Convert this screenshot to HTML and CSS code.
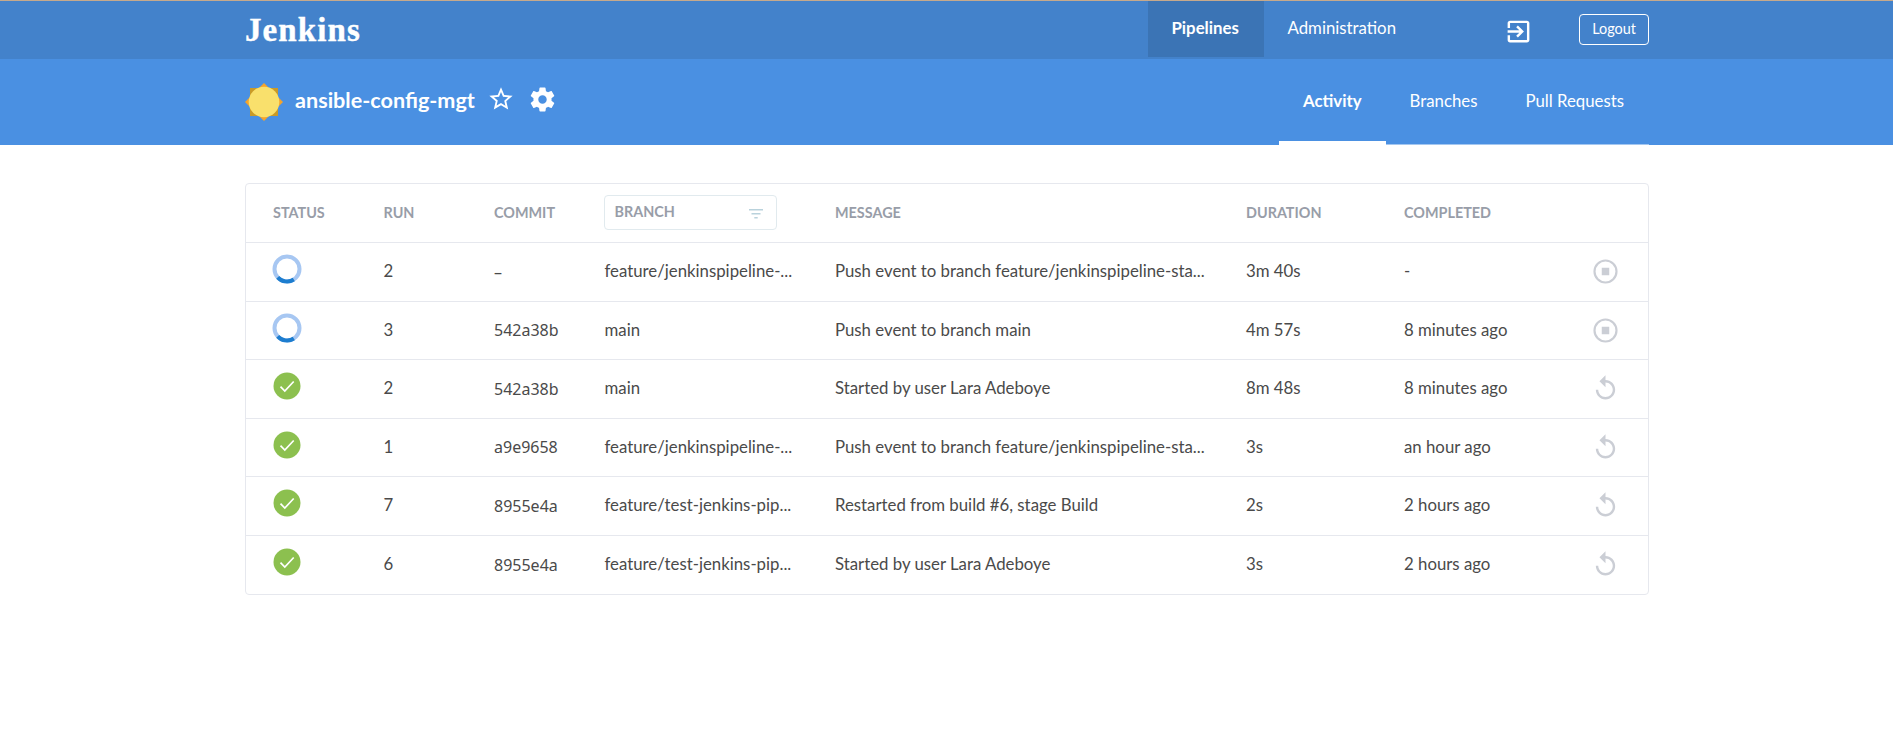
FILE: index.html
```
<!DOCTYPE html>
<html lang="en">
<head>
<meta charset="utf-8">
<title>Jenkins Blue Ocean</title>
<link rel="stylesheet" href="styles.css">
</head>
<body>
<svg class="defs" aria-hidden="true">
  <symbol id="running" viewBox="0 0 30 30"><circle cx="15" cy="15" r="12.5" fill="none" stroke="#a7c7f2" stroke-width="4"/><path d="M5.7 23.3A12.5 12.5 0 0 0 21.8 25.5" fill="none" stroke="#1d7dcf" stroke-width="4"/></symbol>
  <symbol id="success" viewBox="0 0 30 30"><circle cx="15" cy="15" r="13.5" fill="#8cc04f"/><path d="M8.5 15.6l4.3 4.5 8.9-9.6" fill="none" stroke="#fff" stroke-width="1.7"/></symbol>
  <symbol id="stop" viewBox="0 0 24 24"><path d="M12 2a10 10 0 1 0 0 20 10 10 0 0 0 0-20zm0 18.2a8.2 8.2 0 1 1 0-16.4 8.2 8.2 0 0 1 0 16.4zM8.9 8.9h6.2v6.2H8.9z"/></symbol>
  <symbol id="replay" viewBox="0 0 24 24"><path d="M12 5V1L7 6l5 5V7c3.31 0 6 2.69 6 6s-2.69 6-6 6-6-2.69-6-6H4c0 4.42 3.58 8 8 8s8-3.58 8-8-3.58-8-8-8z"/></symbol>
</svg>
<header class="topbar">
  <div class="container topbar-inner">
    <div class="logo">Jenkins</div>
    <nav class="topnav">
      <a class="toplink active">Pipelines</a>
      <a class="toplink">Administration</a>
      <svg class="exit" viewBox="0 0 24 24"><path d="M10.09 15.59L11.5 17l5-5-5-5-1.41 1.41L12.67 11H3v2h9.67l-2.58 2.59zM19 3H5c-1.11 0-2 .9-2 2v4h2V5h14v14H5v-4H3v4c0 1.1.89 2 2 2h14c1.1 0 2-.9 2-2V5c0-1.1-.9-2-2-2z"/></svg>
      <a class="logout">Logout</a>
    </nav>
  </div>
</header>
<section class="subbar">
  <div class="container subbar-inner">
    <svg class="weather" viewBox="0 0 38 38"><path fill="#c99a27" d="M5 5h28v28H5z"/><path fill="#f5a42a" d="M19 0l19 19-19 19L0 19z"/><circle cx="19" cy="19" r="15.3" fill="#f9e06c"/></svg>
    <h1 class="title">ansible-config-mgt</h1>
    <svg class="star" viewBox="0 0 24 24"><path d="M22 9.24l-7.19-.62L12 2 9.19 8.63 2 9.24l5.46 4.73L5.82 21 12 17.27 18.18 21l-1.63-7.03L22 9.24zM12 15.4l-3.76 2.27 1-4.28-3.32-2.88 4.38-.38L12 6.1l1.71 4.04 4.38.38-3.32 2.88 1 4.28L12 15.4z"/></svg>
    <svg class="gear" viewBox="0 0 24 24"><path d="M19.43 12.98c.04-.32.07-.64.07-.98s-.03-.66-.07-.98l2.11-1.65c.19-.15.24-.42.12-.64l-2-3.46c-.12-.22-.39-.3-.61-.22l-2.49 1c-.52-.4-1.08-.73-1.69-.98l-.38-2.65C14.46 2.18 14.25 2 14 2h-4c-.25 0-.46.18-.49.42l-.38 2.65c-.61.25-1.17.59-1.69.98l-2.49-1c-.23-.09-.49 0-.61.22l-2 3.46c-.13.22-.07.49.12.64l2.11 1.65c-.04.32-.07.65-.07.98s.03.66.07.98l-2.11 1.65c-.19.15-.24.42-.12.64l2 3.46c.12.22.39.3.61.22l2.49-1c.52.4 1.08.73 1.69.98l.38 2.65c.03.24.24.42.49.42h4c.25 0 .46-.18.49-.42l.38-2.65c.61-.25 1.17-.59 1.69-.98l2.49 1c.23.09.49 0 .61-.22l2-3.46c.12-.22.07-.49-.12-.64l-2.11-1.65zM12 15.5c-1.93 0-3.5-1.57-3.5-3.5s1.57-3.5 3.5-3.5 3.5 1.57 3.5 3.5-1.57 3.5-3.5 3.5z"/></svg>
    <nav class="tabs">
      <a class="tab active">Activity</a>
      <a class="tab">Branches</a>
      <a class="tab">Pull Requests</a>
    </nav>
  </div>
</section>
<main class="container">
  <div class="table">
    <div class="row head">
      <span>STATUS</span><span>RUN</span><span>COMMIT</span>
      <div class="filter"><span>BRANCH</span><svg class="filter-icon" viewBox="0 0 14 10"><path d="M0 0h14v1.6H0zM2.5 4h9v1.6h-9zM5.3 8h3.4v1.5H5.3z"/></svg></div>
      <span>MESSAGE</span><span>DURATION</span><span>COMPLETED</span><span></span>
    </div>
    <div class="row">
      <svg class="status"><use href="#running"/></svg><span>2</span><span class="hash">–</span><span>feature/jenkinspipeline-...</span><span>Push event to branch feature/jenkinspipeline-sta...</span><span>3m 40s</span><span>-</span><svg class="action"><use href="#stop"/></svg>
    </div>
    <div class="row">
      <svg class="status"><use href="#running"/></svg><span>3</span><span class="hash">542a38b</span><span>main</span><span>Push event to branch main</span><span>4m 57s</span><span>8 minutes ago</span><svg class="action"><use href="#stop"/></svg>
    </div>
    <div class="row">
      <svg class="status"><use href="#success"/></svg><span>2</span><span class="hash">542a38b</span><span>main</span><span>Started by user Lara Adeboye</span><span>8m 48s</span><span>8 minutes ago</span><svg class="action"><use href="#replay"/></svg>
    </div>
    <div class="row">
      <svg class="status"><use href="#success"/></svg><span>1</span><span class="hash">a9e9658</span><span>feature/jenkinspipeline-...</span><span>Push event to branch feature/jenkinspipeline-sta...</span><span>3s</span><span>an hour ago</span><svg class="action"><use href="#replay"/></svg>
    </div>
    <div class="row">
      <svg class="status"><use href="#success"/></svg><span>7</span><span class="hash">8955e4a</span><span>feature/test-jenkins-pip...</span><span>Restarted from build #6, stage Build</span><span>2s</span><span>2 hours ago</span><svg class="action"><use href="#replay"/></svg>
    </div>
    <div class="row">
      <svg class="status"><use href="#success"/></svg><span>6</span><span class="hash">8955e4a</span><span>feature/test-jenkins-pip...</span><span>Started by user Lara Adeboye</span><span>3s</span><span>2 hours ago</span><svg class="action"><use href="#replay"/></svg>
    </div>
  </div>
</main>
</body>
</html>
```
FILE: styles.css
```
* { box-sizing: border-box; }
body { margin: 0; background: #fff; color: #4a4a4a; font: 16.8px/24px Lato, sans-serif; }
.defs { display: none; }
.container { width: 1404px; margin-left: 245px; }
.topbar { height: 59px; background: #4382cb; border-top: 1px solid #c6a98c; }
.topbar-inner { display: flex; justify-content: space-between; }
.logo { color: #fff; font: bold 33px/38px "Liberation Serif", serif; letter-spacing: 1.1px; padding-top: 10px; -webkit-text-stroke: .4px #fff; }
.topnav { display: flex; align-items: flex-start; color: #fff; }
.toplink { height: 56px; padding: 15px 24px 0; }
.topnav .active { width: 116px; background: #3b74b5; font-weight: bold; }
.exit { width: 29px; height: 29px; fill: #fff; margin: 16px 46px 0 84px; }
.logout { width: 70px; height: 31px; margin-top: 13px; border: 1px solid #fff; border-radius: 4px; font-size: 14.4px; line-height: 28px; text-align: center; }
.subbar { height: 86px; background: #4a90e2; color: #fff; }
.subbar-inner { display: flex; align-items: flex-start; height: 86px; }
.weather { width: 38px; height: 38px; margin-top: 24px; }
.title { margin: 25px 0 0 12px; width: 180px; font: bold 21.6px/32px Lato, sans-serif; white-space: nowrap; }
.star { width: 28px; height: 28px; fill: #fff; margin: 26px 0 0 12px; }
.gear { width: 29px; height: 29px; fill: #fff; margin: 26px 0 0 13px; }
.tabs { display: flex; margin-left: auto; height: 86px; border-bottom: 1px solid #a4c7f0; }
.tab { height: 86px; padding: 30px 24px 0; }
.tab:last-child { padding-right: 25px; }
.tabs .active { font-weight: bold; border-bottom: 4px solid #fff; }
.table { margin-top: 38px; border: 1px solid #e6e8ee; border-radius: 4px; display: grid; grid-template-rows: 58px 59px 58px 59px 58px 59px 58px; }
.row { display: grid; grid-template-columns: 110.5px 110.5px 110.5px 230.5px 411px 158px 190px 24px; padding-left: 27px; align-items: center; border-bottom: 1px solid #e6e8ee; white-space: nowrap; }
.row > span { padding-bottom: 2px; }
.row:first-child { height: 59px; }
.table { grid-template-rows: 59px 59px 58px 59px 58px 59px 58px; }
.row:last-child { border-bottom: 0; }
.head { color: #989da8; font-size: 14.4px; font-weight: bold; }
.head > span { padding-bottom: 0; }
.filter { display: flex; justify-content: space-between; width: 173px; height: 35px; margin: -1px 0 0 -1px; border: 1px solid #e1eaee; border-radius: 4px; padding: 4px 13px 0 10px; }
.filter-icon { width: 14px; height: 10px; margin-top: 9px; fill: #b9d2dc; }
.status { width: 30px; height: 30px; margin: -6px 0 0 -1px; }
.action { width: 29px; height: 29px; margin: -1px 0 0 -3px; fill: #cbced5; }
.row > .hash { font: 16px/24px "Noto Sans", sans-serif; padding-bottom: 1px; }
```
